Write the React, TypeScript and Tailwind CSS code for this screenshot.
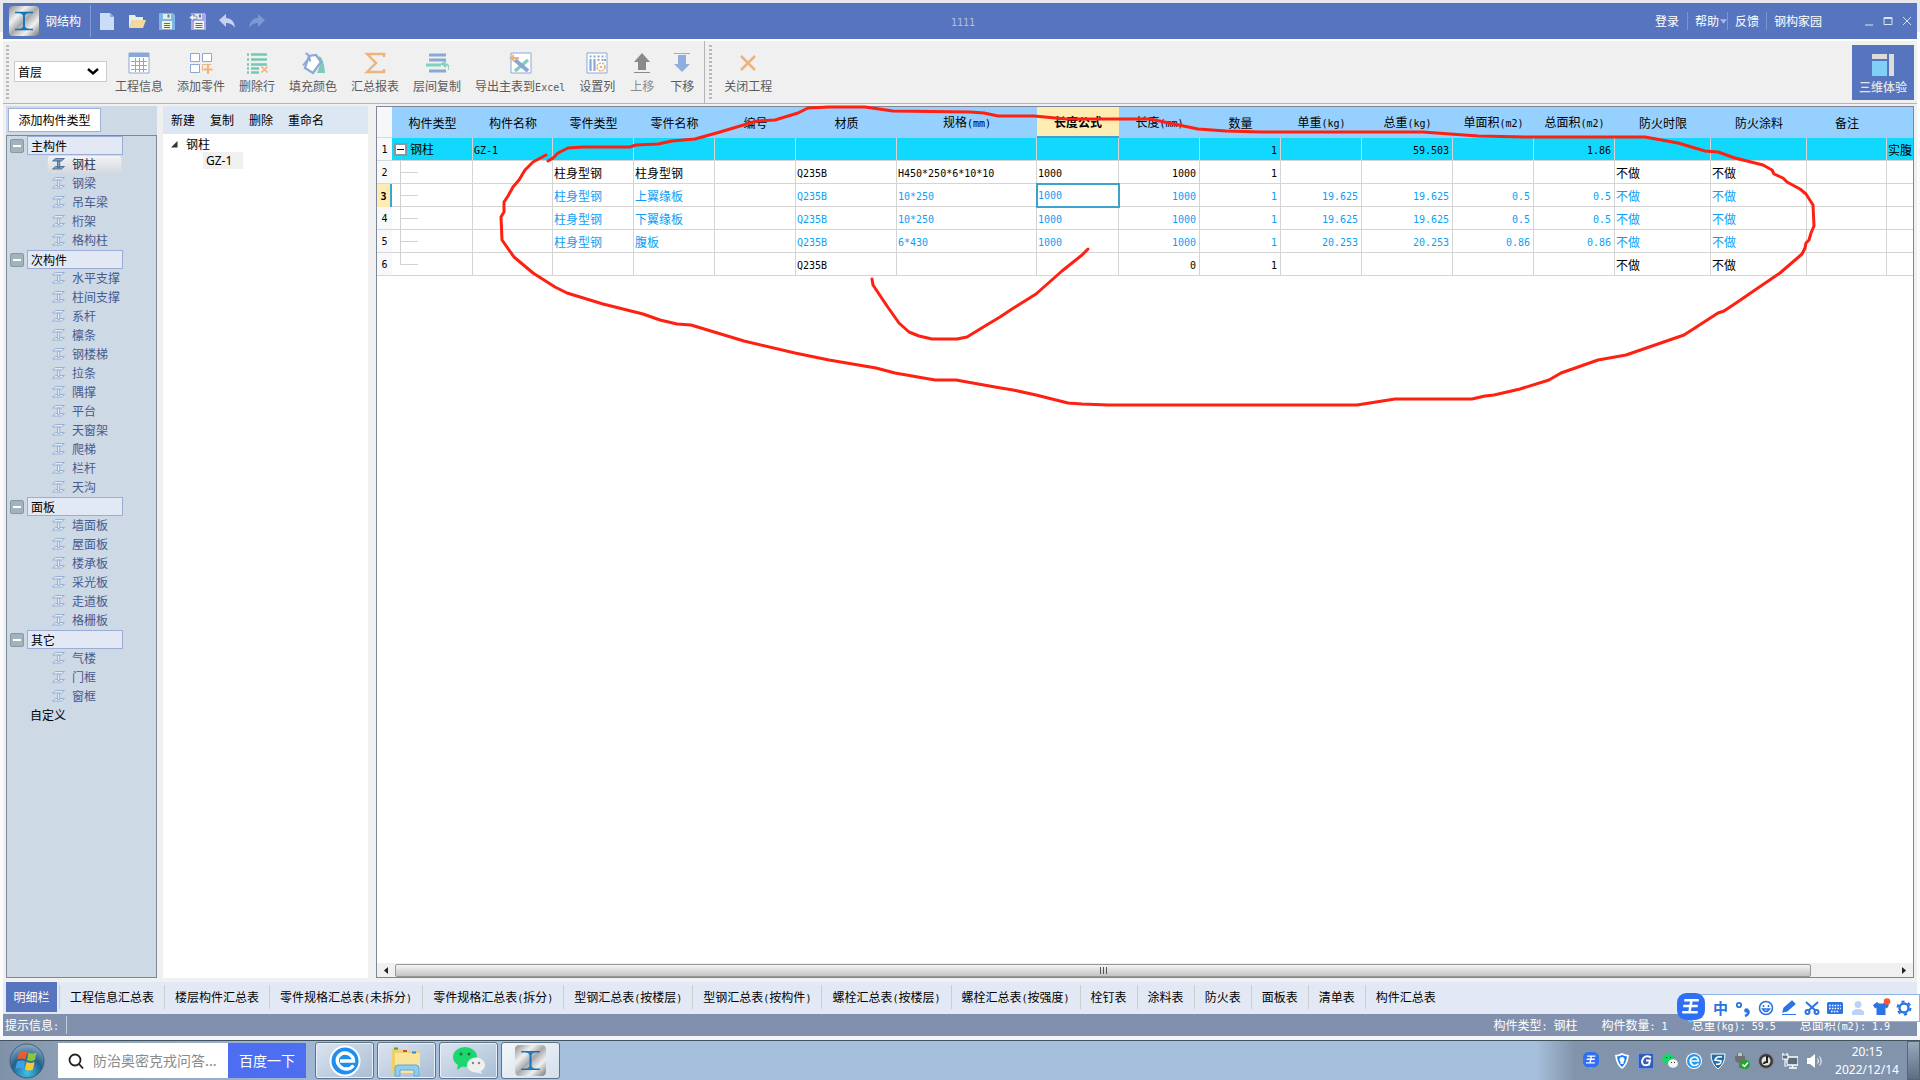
import React from "react";
import clsx from "clsx";

const SECTIONS = [
  { label: "主构件", items: ["钢柱", "钢梁", "吊车梁", "桁架", "格构柱"] },
  {
    label: "次构件",
    items: ["水平支撑", "柱间支撑", "系杆", "檩条", "钢楼梯", "拉条", "隅撑", "平台", "天窗架", "爬梯", "栏杆", "天沟"],
  },
  { label: "面板", items: ["墙面板", "屋面板", "楼承板", "采光板", "走道板", "格栅板"] },
  { label: "其它", items: ["气楼", "门框", "窗框"] },
];

const COLUMNS = [
  { label: "构件类型", col: "w-[81px]" },
  { label: "构件名称", col: "w-[80px]" },
  { label: "零件类型", col: "w-[81px]" },
  { label: "零件名称", col: "w-[81px]" },
  { label: "编号", col: "w-[81px]" },
  { label: "材质", col: "w-[101px]" },
  { label: "规格(mm)", col: "w-[140px]" },
  { label: "长度公式", col: "w-[82px]" },
  { label: "长度(mm)", col: "w-[81px]", right: true },
  { label: "数量", col: "w-[81px]", right: true },
  { label: "单重(kg)", col: "w-[81px]", right: true },
  { label: "总重(kg)", col: "w-[91px]", right: true },
  { label: "单面积(m2)", col: "w-[81px]", right: true },
  { label: "总面积(m2)", col: "w-[81px]", right: true },
  { label: "防火时限", col: "w-[96px]" },
  { label: "防火涂料", col: "w-[96px]" },
  { label: "备注", col: "w-[80px]" },
  { label: "", col: "w-auto" },
];

const ACTIVE_COL = 7;
const ACTIVE_ROW = 2;

const ROWS: { kind: "main" | "part" | "sub"; cells: string[] }[] = [
  { kind: "main", cells: ["钢柱", "GZ-1", "", "", "", "", "", "", "", "1", "", "59.503", "", "1.86", "", "", "", "实腹"] },
  { kind: "part", cells: ["", "", "柱身型钢", "柱身型钢", "", "Q235B", "H450*250*6*10*10", "1000", "1000", "1", "", "", "", "", "不做", "不做", "", ""] },
  { kind: "sub", cells: ["", "", "柱身型钢", "上翼缘板", "", "Q235B", "10*250", "1000", "1000", "1", "19.625", "19.625", "0.5", "0.5", "不做", "不做", "", ""] },
  { kind: "sub", cells: ["", "", "柱身型钢", "下翼缘板", "", "Q235B", "10*250", "1000", "1000", "1", "19.625", "19.625", "0.5", "0.5", "不做", "不做", "", ""] },
  { kind: "sub", cells: ["", "", "柱身型钢", "腹板", "", "Q235B", "6*430", "1000", "1000", "1", "20.253", "20.253", "0.86", "0.86", "不做", "不做", "", ""] },
  { kind: "part", cells: ["", "", "", "", "", "Q235B", "", "", "0", "1", "", "", "", "", "不做", "不做", "", ""] },
];

const TABS = [
  "明细栏", "工程信息汇总表", "楼层构件汇总表", "零件规格汇总表(未拆分)", "零件规格汇总表(拆分)",
  "型钢汇总表(按楼层)", "型钢汇总表(按构件)", "螺栓汇总表(按楼层)", "螺栓汇总表(按强度)",
  "栓钉表", "涂料表", "防火表", "面板表", "清单表", "构件汇总表",
];

// Latin runs are set in a half-width mono face next to full-width Chinese
function Mix({ text }: { text: string }) {
  return (
    <>
      {text.split(/([\x20-\x7e]+)/).filter(Boolean).map((run, i) =>
        /[\x20-\x7e]/.test(run) ? (
          <span key={i} className="font-['DejaVu_Sans_Mono','Liberation_Mono',monospace] text-[10px] whitespace-pre">{run}</span>
        ) : (
          <React.Fragment key={i}>{run}</React.Fragment>
        )
      )}
    </>
  );
}

function AppLogo({ className, id }: { className: string; id: string }) {
  return (
    <svg viewBox="0 0 30 30" className={className} aria-hidden="true">
      <defs>
        <linearGradient id={id} x1="0" y1="0" x2="1" y2="1">
          <stop offset="0" stopColor="#8c8c8c" />
          <stop offset=".3" stopColor="#f0f0f0" />
          <stop offset=".5" stopColor="#a8a8a8" />
          <stop offset=".72" stopColor="#f0f0f0" />
          <stop offset="1" stopColor="#757575" />
        </linearGradient>
      </defs>
      <rect width="30" height="30" rx="4" fill={`url(#${id})`} />
      <path d="M6 6.500h18M6 23.500h18" stroke="#1372b8" strokeWidth="1.500" />
      <path d="M10 7q4 1 4 3v10q0 2-4 3h10q-4-1-4-3V10q0-2 4-3z" fill="#1479c2" />
    </svg>
  );
}

function BeamIcon({ active }: { active?: boolean }) {
  return (
    <svg width="13" height="12" viewBox="0 0 13 12" aria-hidden="true" className="shrink-0">
      <g fill={active ? "#7da3c9" : "#dceefb"} stroke={active ? "#3c5f86" : "#8fa3c8"} strokeWidth=".8">
        <path d="M3.500.5h9l-3 2.500h-9z" />
        <path d="M3.500 8.500h9l-3 2.500h-9z" />
        <path d="M5.500 3h2.200v6.500H5.500z" />
      </g>
    </svg>
  );
}

const QUICK = [
  {
    name: "新建文件",
    icon: <><path d="M1 0h10l4 4v13H1z" fill="#c9def5" /><path d="M11 0v4h4z" fill="#7fb3c9" /></>,
  },
  {
    name: "打开",
    icon: <><path d="M0 15V2h6l1 2h7v3H4z" fill="#e8efe0" /><path d="M0 15l4-8h13l-3 8z" fill="#f3d9a0" /></>,
  },
  {
    name: "保存",
    icon: <><path d="M0 0h14l2 2v15H0z" fill="#7fb5e6" /><path d="M4 1h8v5H4z" fill="#e4f0dd" /><path d="M8.500 1.500h2v3h-2z" fill="#5774be" /><path d="M3 8h10v8H3z" fill="#e9f3e0" /><path d="M5 10.500h6M5 12.500h6M5 14.500h6" stroke="#4c6f94" /></>,
  },
  {
    name: "另存为",
    icon: <><path d="M2 0h14l1 2v15H2z" fill="#aea6ea" /><path d="M6 1h7v5H6z" fill="#e4f0dd" /><path d="M10 1.500h2v3h-2z" fill="#5774be" /><path d="M5 8h10v8H5z" fill="#f0f6e8" /><path d="M6.500 10.500h7M6.500 12.500h7M6.500 14.500h7" stroke="#4c6f94" /><path d="M0 4.500L4.500 1v2.200H8v2.800H4.500V8z" fill="#eaf6e8" stroke="#5774be" strokeWidth=".6" /></>,
  },
  {
    name: "撤销",
    icon: <path d="M0 7l7-6v4q8 0 9 10-3-5-9-5v4z" fill="#c5d2f0" />,
  },
  {
    name: "重做",
    icon: <path d="M16 7L9 1v4Q1 5 0 15q3-5 9-5v4z" fill="#7e98d2" />,
  },
];

const TOOLS = [
  {
    label: "工程信息",
    icon: <><path d="M1 1h20v20H1z" fill="#fff" stroke="#8aa8d4" /><path d="M1 1h20v4H1z" fill="#8aa8d4" /><path d="M3 9.500h16M3 13.500h16M3 17.500h16M7.500 6v14M11.500 6v14M15.500 6v14" stroke="#8aa8d4" /></>,
  },
  {
    label: "添加零件",
    icon: <><path d="M.5 1.500h9v8h-9zM12.500 1.500h9v8h-9zM.5 12.500h9v8h-9z" fill="#fff" stroke="#8aa8d4" /><path d="M12.500 19v-6.500h9" fill="none" stroke="#e9b583" /><path d="M18 13v9M13.500 17.500h9" stroke="#edb37c" strokeWidth="2" /></>,
  },
  {
    label: "删除行",
    icon: <><path d="M1 2.500h2M5 2.500h16M1 7.500h2M5 7.500h16M1 12.500h2M5 12.500h16M1 16.500h2M5 16.500h8M1 20.500h2M5 20.500h8" stroke="#74c9b6" strokeWidth="2.400" /><path d="M15.500 14.500l6 6M21.500 14.500l-6 6" stroke="#edb37c" strokeWidth="1.600" /></>,
  },
  {
    label: "填充颜色",
    icon: <><path d="M17 4q5 2 6 17h-8l3-8z" fill="#7fcab9" /><path d="M7 4l7-1 5 7-8 11-8-5z" fill="#fff" stroke="#8aa8d4" strokeWidth="2.200" /><path d="M3.500 1.500q4 0 4.500 8M1 13.500l4-5" fill="none" stroke="#8aa8d4" strokeWidth="2" /></>,
  },
  {
    label: "汇总报表",
    icon: <path d="M20 5V2H3l9 9-9 9h17v-3" fill="none" stroke="#edb37c" strokeWidth="2.400" />,
  },
  {
    label: "层间复制",
    icon: <><path d="M3 3h17M3 8h17M3 19h17" stroke="#8aa8d4" strokeWidth="3" /><path d="M0 13h15" stroke="#7fd0bd" strokeWidth="3" /><path d="M23 18q1-6-5-6M20 9l-4 3 4 3" fill="none" stroke="#7fd0bd" strokeWidth="1.800" /></>,
  },
  {
    label: "导出主表到Excel",
    icon: <><path d="M2 1h20v20H2z" fill="#fff" stroke="#8aa8d4" /><path d="M19 8L6 19" stroke="#84cdbb" strokeWidth="3.500" /><path d="M6 8l13 11" stroke="#8aa8d4" strokeWidth="4" /><path d="M0 6l5-4v3h5v2.500H5V10z" fill="#edb37c" /></>,
  },
  {
    label: "设置列",
    icon: <><path d="M1 1h20v20H1z" fill="#fff" stroke="#8aa8d4" /><path d="M4.500 7v12M8.500 7v12" stroke="#8aa8d4" strokeWidth="2.200" /><path d="M3.500 4.500H20M12.500 7v4M16.500 7v2M19 7v2" stroke="#8aa8d4" strokeWidth="2" strokeDasharray="2 2" /><circle cx="15" cy="15" r="4" fill="#fff" stroke="#edb37c" strokeWidth="1.600" strokeDasharray="2.400 .8" /><circle cx="15" cy="15" r="1.300" fill="#edb37c" /></>,
  },
  {
    label: "上移",
    icon: <><path d="M11 1l8 9h-4v8H7v-8H3z" fill="#8a8a8a" /><path d="M3 20.500h16" stroke="#8a8a8a" /></>,
  },
  {
    label: "下移",
    icon: <><path d="M11 20l8-8h-4V3H7v9H3z" fill="#8eafdb" /><path d="M3 1.500h16" stroke="#8eafdb" /></>,
  },
];

function Toolbar() {
  return (
    <div className="flex h-[63px] shrink-0 items-stretch border-b border-[#b4b4b4] bg-[#f0f0f0] pl-[3px]">
      <Grip />
      <div className="relative mt-[20px] ml-[5px] h-[21px] w-[93px]">
        <select aria-label="楼层" className="block h-[21px] w-full appearance-none border border-[#c9cbd0] bg-white pl-[3px] text-[12px] leading-[19px] text-black">
          <option>首层</option>
        </select>
        <svg viewBox="0 0 12 8" className="pointer-events-none absolute top-[7px] right-2 h-2 w-3" aria-hidden="true">
          <path d="M1 1l5 4.500L11 1" fill="none" stroke="#000" strokeWidth="2.400" />
        </svg>
      </div>
      <div className="ml-2 flex gap-[14px]">
        {TOOLS.map((t) => (
          <ToolButton key={t.label} {...t} narrow={t.label.length < 3} />
        ))}
      </div>
      <div className="ml-[9px] w-px bg-[#b4b4b4]" />
      <div className="ml-1 flex">
        <Grip />
        <div className="ml-3 flex">
          <ToolButton label="关闭工程" icon={<path d="M4 4l14 14M18 4L4 18" stroke="#edb37c" strokeWidth="2.600" />} />
        </div>
      </div>
      <button className="mt-1 mr-[3px] ml-auto flex h-[55px] w-[62px] flex-col items-center bg-[#5774be] pt-[9px] text-[12px] leading-[16px] font-medium text-[#e4e4e4]">
        <svg viewBox="0 0 22 22" className="mb-[3px] h-[22px] w-[22px]" aria-hidden="true">
          <path d="M0 0h15v5H0zM17 0h5v22h-5z" fill="#dcdcdc" />
          <path d="M0 7h15v15H0z" fill="#80d0f6" />
        </svg>
        三维体验
      </button>
    </div>
  );
}

function Grip() {
  return (
    <div className="my-1 w-[3px] bg-[repeating-linear-gradient(to_bottom,#b9b9b9_0_2px,transparent_2px_4px)]" />
  );
}

function ToolButton({ label, icon, narrow }: { label: string; icon: React.ReactNode; narrow?: boolean }) {
  return (
    <button
      className={clsx(
        "flex flex-col items-center pt-[11px] text-[12px] leading-[16px] whitespace-nowrap",
        narrow && "px-px",
        label === "上移" ? "text-[#8c8c8c]" : "text-[#5a5a5a]"
      )}
    >
      <svg viewBox="0 0 23 23" className="mb-[3px] h-[23px] w-[23px]" aria-hidden="true">{icon}</svg>
      <span><Mix text={label} /></span>
    </button>
  );
}

function TitleBar() {
  return (
    <header className="flex h-9 shrink-0 items-center bg-[#5774be] pl-[6px] text-[12px] text-white">
      <div className="flex flex-1 items-center">
        <AppLogo id="logo-title" className="h-[30px] w-[30px]" />
        <span className="ml-[6px]">钢结构</span>
        <div className="ml-[9px] h-8 w-px bg-[#8299d3]" />
        <div className="ml-2 flex gap-[13px]">
          {QUICK.map((q) => (
            <button key={q.name} aria-label={q.name} className="h-[17px] w-[17px]">
              <svg viewBox="0 0 17 17" className="h-[17px] w-[17px]" aria-hidden="true">{q.icon}</svg>
            </button>
          ))}
        </div>
      </div>
      <span className="text-[#b0bfe6]"><Mix text="1111" /></span>
      <div className="flex flex-1 items-center justify-end">
        <nav className="flex items-center">
          <a href="#login" className="pr-2">登录</a>
          <a href="#help" className="flex items-center border-l border-[#7c95d0] pl-[7px]">
            帮助
            <svg viewBox="0 0 8 5" className="ml-px h-[5px] w-[7px]" aria-hidden="true"><path d="M0 0h8L4 5z" fill="#a9b9e2" /></svg>
          </a>
          <a href="#feedback" className="border-l border-[#7c95d0] px-[7px]">反馈</a>
          <a href="#home" className="border-l border-[#7c95d0] pl-[7px]">钢构家园</a>
        </nav>
        <div className="ml-[42px] flex gap-[9px] pr-[5px]">
          {[
            { name: "最小化", d: "M1 9h8" },
            { name: "最大化", d: "M1 1.500h8v7H1zM1 2.500h8" },
            { name: "关闭", d: "M1 1l8 8M9 1L1 9" },
          ].map((b) => (
            <button key={b.name} aria-label={b.name}>
              <svg viewBox="0 0 10 10" className="h-[10px] w-[10px]" aria-hidden="true">
                <path d={b.d} fill="none" stroke="#dbe3f6" />
              </svg>
            </button>
          ))}
        </div>
      </div>
    </header>
  );
}

function TypePanel() {
  return (
    <aside className="flex w-[151px] shrink-0 flex-col bg-[#cdd9e5]">
      <div className="p-[2px]">
        <button className="block h-6 w-[93px] border border-[#a0b0d8] bg-white text-[12px] leading-[16px] text-black">添加构件类型</button>
      </div>
      <div className="mt-px flex-1 border border-[#7d8799] text-[12px] leading-[18px]">
        {SECTIONS.map((s, si) => (
          <section key={s.label}>
            <div className="flex h-[19px] items-center pl-[3px]">
              <button aria-label={`折叠${s.label}`} className="flex h-[14px] w-[14px] items-center justify-center rounded-[2px] border border-[#8598a4] bg-[#a3b3be]">
                <span className="h-[2px] w-2 bg-white" />
              </button>
              <h3 className="ml-[3px] h-[19px] w-24 border border-[#9bacd6] bg-[#e3e9f4] pl-[3px] text-black">{s.label}</h3>
            </div>
            <ul>
              {s.items.map((item, i) => {
                const active = si === 0 && i === 0;
                return (
                  <li key={item} className="h-[19px] pl-10">
                    <button
                      className={clsx(
                        "flex h-[18px] w-[75px] items-center gap-[7px] rounded-[3px] border pl-1 whitespace-nowrap",
                        active ? "border-[#d8dce2] bg-gradient-to-b from-[#f2f3f5] to-[#d6dade] text-[#1d2c4d]" : "border-transparent text-[#47598f]"
                      )}
                    >
                      <BeamIcon active={active} />
                      {item}
                    </button>
                  </li>
                );
              })}
            </ul>
          </section>
        ))}
        <button className="block pl-[23px] text-black">自定义</button>
      </div>
    </aside>
  );
}

function MemberPanel() {
  return (
    <section className="w-[205px] shrink-0 bg-white text-[12px] text-black">
      <div className="flex h-7 items-center gap-[15px] bg-[#dce7f3] pl-2">
        {["新建", "复制", "删除", "重命名"].map((a) => (
          <button key={a}>{a}</button>
        ))}
      </div>
      <div className="flex items-center gap-2 pt-[2px] pl-2 leading-4">
        <svg viewBox="0 0 7 7" className="h-[7px] w-[7px]" aria-hidden="true"><path d="M6.500 0v6.500H0z" fill="#333" /></svg>
        钢柱
      </div>
      <button className="ml-10 block h-[17px] w-10 bg-[#f0f0f0] pl-[3px] text-left font-['Noto_Sans',sans-serif] text-[12px] leading-[17px]">GZ-1</button>
    </section>
  );
}

function Branch({ last }: { last: boolean }) {
  return (
    <svg viewBox="0 0 30 22" className="block h-[22px] w-[30px]" aria-hidden="true">
      <path d={last ? "M8.500 0v11.500H26" : "M8.500 0v22M8.500 11.500H26"} fill="none" stroke="#d2d2d2" />
    </svg>
  );
}

function DetailTable() {
  const [formula, setFormula] = React.useState("1000");
  return (
    <table className="w-full table-fixed border-separate border-spacing-0 text-[12px] leading-[16px]">
      <colgroup>
        <col className="w-[15px]" />
        {COLUMNS.map((c, i) => <col key={i} className={c.col} />)}
      </colgroup>
      <thead>
        <tr className="h-[31px]">
          <th aria-label="行号" className="border-b border-[#d8d8d8] bg-[#f6f7f8]" />
          {COLUMNS.map((c, i) => (
            <th
              key={i}
              className={clsx(
                "p-0 whitespace-nowrap",
                i === ACTIVE_COL ? "border-b-2 border-[#3ba3cd] bg-[#ffecb3] font-bold" : "bg-[#95d0ff] font-normal"
              )}
            >
              <Mix text={c.label} />
            </th>
          ))}
        </tr>
      </thead>
      <tbody>
        {ROWS.map((row, r) => (
          <tr
            key={r}
            className={clsx("h-[23px]", row.kind === "main" && "bg-[#11d9fd]", row.kind === "sub" ? "text-[#0a9ff5]" : "text-black")}
          >
            <th
              scope="row"
              className={clsx(
                "p-0 text-center text-black",
                r === ACTIVE_ROW ? "border-r-2 border-[#3ba3cd] bg-[#ffecb3] font-bold" : "border-b border-[#d8d8d8] bg-[#f7f8f9] font-normal"
              )}
            >
              <Mix text={String(r + 1)} />
            </th>
            {row.cells.map((cell, c) => (
              <td
                key={c}
                className={clsx(
                  "overflow-hidden border-b border-[#d4d4d4] p-0 whitespace-nowrap",
                  c > 0 && "pt-px",
                  c < 17 && "border-r",
                  COLUMNS[c].right ? "pr-[3px] text-right" : c > 0 && "pl-px",
                  r === ACTIVE_ROW && c === ACTIVE_COL && "outline-2 -outline-offset-1 outline-[#3ba3cd]"
                )}
              >
                {c === 0 && r === 0 ? (
                  <div className="flex items-center gap-[3px] pl-[2px]">
                    <button aria-label="折叠" className="flex h-[13px] w-[13px] items-center justify-center border-2 border-[#8f9499] bg-white">
                      <span className="h-px w-[7px] bg-black" />
                    </button>
                    {cell}
                  </div>
                ) : c === 0 ? (
                  <Branch last={r === ROWS.length - 1} />
                ) : r === ACTIVE_ROW && c === ACTIVE_COL ? (
                  <input
                    aria-label="长度公式"
                    value={formula}
                    onChange={(e) => setFormula(e.target.value)}
                    className="block w-full bg-transparent pt-px font-['DejaVu_Sans_Mono',monospace] text-[10px] leading-[16px] outline-none"
                  />
                ) : (
                  <Mix text={cell} />
                )}
              </td>
            ))}
          </tr>
        ))}
      </tbody>
    </table>
  );
}

function ScrollBar() {
  return (
    <div className="flex h-[14px] items-center bg-[#f0f0f0]">
      <button aria-label="向左滚动" className="flex w-[18px] justify-center">
        <svg viewBox="0 0 4 7" className="h-[7px] w-1" aria-hidden="true"><path d="M4 0v7L0 3.500z" fill="#222" /></svg>
      </button>
      <div className="flex h-[13px] flex-1 items-center justify-center gap-[2px] rounded-[2px] border border-[#979797] bg-gradient-to-b from-[#f4f4f4] via-[#dcdcdc] to-[#c4c4c4]">
        <span className="h-[7px] w-px bg-[#555]" />
        <span className="h-[7px] w-px bg-[#555]" />
        <span className="h-[7px] w-px bg-[#555]" />
      </div>
      <button aria-label="向右滚动" className="flex w-[102px] justify-end pr-[7px]">
        <svg viewBox="0 0 4 7" className="h-[7px] w-1" aria-hidden="true"><path d="M0 0v7l4-3.500z" fill="#222" /></svg>
      </button>
    </div>
  );
}

const IME_ICONS = [
  { name: "标点", icon: <><circle cx="4" cy="5" r="2.200" fill="none" stroke="#2b74e2" strokeWidth="1.800" /><path d="M13 10q2 4-3 6" fill="none" stroke="#2b74e2" strokeWidth="2.500" /><circle cx="11.500" cy="10.500" r="2.300" fill="#2b74e2" /></> },
  { name: "表情", icon: <g fill="none" stroke="#2b74e2" strokeWidth="1.600"><circle cx="8" cy="8" r="6.500" /><path d="M4.500 9q3.500 5 7 0zM5.500 5v2M10.500 5v2" /></g> },
  { name: "手写", icon: <path d="M1 14.500h14M2 12l1-4 8-7 3 3-8 7z" fill="#2b74e2" stroke="#2b74e2" strokeWidth="1.200" /> },
  { name: "截图", icon: <g fill="none" stroke="#2b74e2" strokeWidth="2"><path d="M2 2l10 9M14 2L4 11" /><circle cx="3.500" cy="12" r="2" /><circle cx="12.500" cy="12" r="2" /></g> },
  { name: "键盘", icon: <><rect x="0" y="2" width="16" height="12" rx="1.500" fill="#2b74e2" /><path d="M2 5.500h12M2 8.500h12M4 11.500h8" stroke="#fff" strokeWidth="1.600" strokeDasharray="1.600 1.200" /></> },
  { name: "账号", icon: <g fill="#bcd2f7"><circle cx="8" cy="4.500" r="3.500" /><path d="M2 15V12q1-3 6-3t6 3v3z" /></g> },
  { name: "皮肤", icon: <><path d="M4 2l2 1.500h4L12 2l4 3-2 3.500-1.500-1V15h-9V7.500L2 8.500 0 5z" fill="#2b74e2" /><circle cx="14" cy="1.500" r="3.300" fill="#fc5531" /></> },
  { name: "设置", icon: <><circle cx="8" cy="8" r="4.500" fill="none" stroke="#2b74e2" strokeWidth="2.400" /><circle cx="8" cy="8" r="6.500" fill="none" stroke="#2b74e2" strokeWidth="2" strokeDasharray="3.200 3.600" /></> },
];

function WangLogo({ className }: { className: string }) {
  return (
    <svg viewBox="0 0 27 29" className={className} aria-hidden="true">
      <path d="M9 25l4 4 5-5z" fill="#55c2fa" />
      <rect x="0" y="0" width="27" height="26" rx="9" fill="#2e6ff6" />
      <path d="M7 7h14M6 12.500h14M5 18.500h15M14 7l-2 11.500" stroke="#fff" strokeWidth="2.400" fill="none" />
    </svg>
  );
}

function ImeBar() {
  return (
    <div className="absolute right-0 bottom-[58px] flex h-7 w-[232px] items-center border border-[#8fb4e4] bg-white pr-[7px] pl-6">
      <WangLogo className="absolute -top-[2px] -left-[12px] h-[30px] w-[28px]" />
      <div className="flex flex-1 items-center justify-between overflow-visible">
        <button className="text-[15px] leading-[18px] font-bold text-[#2b74e2]">中</button>
        {IME_ICONS.map((i) => (
          <button key={i.name} aria-label={i.name}>
            <svg viewBox="0 0 16 16" className="h-4 w-4 overflow-visible" aria-hidden="true">{i.icon}</svg>
          </button>
        ))}
      </div>
    </div>
  );
}

const TRAY = [
  { name: "安全", icon: <><path d="M8 0q4 2 7 2-1 10-7 14Q2 12 1 2q3 0 7-2z" fill="#fff" /><path d="M8 2q3 1 5 1.500-1 7-5 10.500-4-3.500-5-10.500Q6 3 8 2z" fill="#1b7bf0" /><circle cx="8" cy="6.500" r="2.500" fill="#fff" /><path d="M6.500 7h3v4h-3z" fill="#fff" /></> },
  { name: "输入", icon: <><rect width="16" height="16" fill="#315cbd" stroke="#a9c2ee" /><path d="M13 4.500Q6 1 4 8q0 6 7 3.500l1-4H8" fill="none" stroke="#fff" strokeWidth="2" /></> },
  { name: "微信", icon: <><ellipse cx="6" cy="6" rx="6" ry="5" fill="#19d66b" /><ellipse cx="11" cy="10.500" rx="5" ry="4.300" fill="#f4f4f4" /><path d="M4 4.500h1M8 4.500h1M9 9.500h1M12 9.500h1" stroke="#333" /></> },
  { name: "浏览器", icon: <><circle cx="8" cy="8" r="8" fill="#fff" /><circle cx="8" cy="8" r="7" fill="#1f9af0" /><path d="M12.500 10.500Q10 13.500 6.500 12 3.500 9.500 4.500 6.500 7 3 10.500 4.500q2 1.500 2 3.500h-7" fill="none" stroke="#fff" strokeWidth="1.700" /></> },
  { name: "防护", icon: <><path d="M1 1h14q0 10-7 15Q1 11 1 1z" fill="#1f6ea8" stroke="#fff" /><path d="M12 4Q6 3 5 7l6 1q0 4-5 3" fill="none" stroke="#fff" strokeWidth="1.600" /></> },
  { name: "设备", icon: <><path d="M3 0h6v3h2v6q-3 1-3 6H5v-5Q1 9 1 6V3h2z" fill="#6f6f6f" /><path d="M4 0h4v3H4z" fill="#c4c4c4" /><circle cx="11" cy="11.500" r="5" fill="#27a335" /><path d="M8.500 11.500l2 2 3.500-4" fill="none" stroke="#fff" strokeWidth="1.500" /></> },
  { name: "音频", icon: <><circle cx="8" cy="8" r="7.500" fill="#3b3b3b" stroke="#888" /><circle cx="8" cy="8" r="4.500" fill="#e5e5e5" /><path d="M9 3v6q-3 0-3 2" stroke="#222" strokeWidth="2" fill="none" /></> },
  { name: "网络", icon: <><path d="M5 4h11v8H5z" fill="#5d6d80" stroke="#fff" strokeWidth="1.400" /><path d="M7 15h8M10.500 12v3" stroke="#fff" strokeWidth="1.500" /><path d="M0 2h6v4H0zM1 0v2M5 0v2M3 6v7h2" stroke="#fff" fill="#5d6d80" strokeWidth="1.200" /></> },
  { name: "音量", icon: <><path d="M1 5h3l5-4v14l-5-4H1z" fill="#fff" /><path d="M11.500 5.500q2 2.500 0 5M13.500 3.500q3.500 4.500 0 9" fill="none" stroke="#fff" /></> },
];

const APPS = [
  {
    name: "浏览器",
    icon: <><circle cx="16" cy="16" r="15.500" fill="#fff" /><circle cx="16" cy="16" r="13.500" fill="#1c8ff0" /><path d="M24.500 20.500Q20 26 13 23 7 19 8.500 13 12 6.500 19 8.500q5.500 2.500 5.500 7.500H11" fill="none" stroke="#fff" strokeWidth="3.400" /></>,
  },
  {
    name: "资源管理器",
    icon: <><path d="M1 4h9l2 2h17v22H1z" fill="#f0cf68" /><path d="M4 8h25v20H4z" fill="#f9e49b" /><path d="M3 3.500h4" stroke="#4f9f3b" strokeWidth="2" /><path d="M12 6h4" stroke="#d64b2c" strokeWidth="2" /><path d="M21 7.500h4" stroke="#3b86c8" strokeWidth="2" /><path d="M4 31v-8q0-3 3-3h18q3 0 3 3v8h-5v-6H9v6z" fill="#8ecdf0" stroke="#5fa9d8" /></>,
  },
  {
    name: "微信",
    icon: <><ellipse cx="12" cy="12" rx="12" ry="10" fill="#1cd76d" /><path d="M5 19l-1 6 6-4z" fill="#1cd76d" /><ellipse cx="23" cy="20" rx="9" ry="7.500" fill="#efefef" /><path d="M27 25l2 4-6-2z" fill="#efefef" /><g fill="#14733c"><circle cx="8" cy="9" r="1.500" /><circle cx="16" cy="9" r="1.500" /></g><g fill="#888"><circle cx="20" cy="18" r="1.200" /><circle cx="26" cy="18" r="1.200" /></g></>,
  },
];

function Taskbar() {
  return (
    <footer className="flex h-10 shrink-0 items-stretch border-t border-[#40535f] bg-[#a6bfdc] bg-[linear-gradient(to_right,#7f90a9_0,#8d9fb7_60px,#a6bfdc_400px,#a6bfdc_80%,#8294ab_82%)]">
      <button aria-label="开始" className="ml-[9px] flex w-9 items-center">
        <svg viewBox="0 0 36 36" className="h-9 w-9" aria-hidden="true">
          <defs>
            <radialGradient id="orb" cx=".5" cy=".85" r=".9">
              <stop offset="0" stopColor="#3fc2ea" />
              <stop offset=".5" stopColor="#22608f" />
              <stop offset="1" stopColor="#9db7c9" />
            </radialGradient>
          </defs>
          <circle cx="18" cy="18" r="17" fill="url(#orb)" stroke="#3e5f7c" />
          <path d="M10 10q4-3 8-1l-1.500 7.500q-4-2-8 0z" fill="#ef5b2b" />
          <path d="M19.500 9.500q4 2 8 0L26 17q-4 2-8 0z" fill="#8cc63e" />
          <path d="M8 18.500q4-2 8 0L14.500 26q-4-2-8 0z" fill="#3fa0e8" />
          <path d="M17.500 19q4 2 8 0L24 26.500q-4 2-8 0z" fill="#fcc72c" />
        </svg>
      </button>
      <form className="my-[2px] ml-[13px] flex" onSubmit={(e) => e.preventDefault()}>
        <div className="flex w-[170px] items-center bg-white pl-[10px]">
          <svg viewBox="0 0 16 16" className="h-4 w-4" aria-hidden="true">
            <circle cx="7" cy="7" r="5.500" fill="none" stroke="#222" strokeWidth="1.800" />
            <path d="M11 11l4 4.500" stroke="#222" strokeWidth="1.800" />
          </svg>
          <input aria-label="搜索" placeholder="防治奥密克戎问答..." className="ml-[9px] w-[130px] bg-transparent text-[14px] outline-none placeholder:text-[#8a8a8a]" />
        </div>
        <button className="w-[78px] bg-[#4e6ef2] text-[14px] text-white">百度一下</button>
      </form>
      <div className="ml-[9px] flex gap-[3px] py-px">
        {APPS.map((a) => (
          <button key={a.name} aria-label={a.name} className="flex w-[59px] items-center justify-center rounded-[3px] border border-[#5f7388] bg-gradient-to-br from-[#dbe5f0] to-[#a9bdd5] shadow-[inset_0_0_0_1px_#e8eff7]">
            <svg viewBox="0 0 32 32" className="h-8 w-8" aria-hidden="true">{a.icon}</svg>
          </button>
        ))}
        <button aria-label="钢结构" className="flex w-[59px] items-center justify-center rounded-[3px] border border-[#5f7388] bg-gradient-to-br from-[#f4f7fa] to-[#d3dfec]">
          <AppLogo id="logo-task" className="h-[31px] w-[31px]" />
        </button>
      </div>
      <div className="ml-auto flex items-center gap-2">
        <WangLogo className="mr-[7px] h-[17px] w-4" />
        {TRAY.map((t) => (
          <button key={t.name} aria-label={t.name}>
            <svg viewBox="0 0 16 16" className="h-4 w-4" aria-hidden="true">{t.icon}</svg>
          </button>
        ))}
      </div>
      <div className="ml-[11px] w-[68px] pt-[2px] text-center font-['Noto_Sans','Noto_Sans_CJK_SC',sans-serif] text-[12px] leading-[18px] whitespace-nowrap text-white">
        <div>20:15</div>
        <div>2022/12/14</div>
      </div>
      <button aria-label="显示桌面" className="ml-[6px] w-[13px] border border-[#566577] bg-gradient-to-b from-[#9aa9bb] to-[#5d6d83]" />
    </footer>
  );
}

const LOOP =
  "M548 161L553 158L558 153L568 148L583 147L630 147L636 145L658 144L672 141L695 139L720 132L757 121L775 120L798 113L808 108L829 107L865 107L893 111L970 112L984 113L998 116L1034 116L1066 119L1150 119L1169 123L1198 129L1226 131L1262 132L1423 132L1478 136L1530 137L1645 137L1678 143L1705 151L1718 152L1735 158L1763 165L1772 170L1774 174L1783 178L1787 182L1800 189L1806 194L1813 205L1814 226L1811 233L1809 240L1806 243L1805 248L1802 254L1780 273L1755 290L1739 301L1724 311L1718 313L1684 335L1626 355L1598 360L1561 373L1549 380L1520 389L1494 395L1485 396L1472 399L1395 399L1357 405L1108 405L1082 404L1068 403L1036 395L1013 390L995 387L956 380L935 380L895 373L876 368L829 360L795 353L744 341L691 325L677 324L660 320L643 314L603 304L567 293L555 287L533 273L514 257L502 240L501 217L504 212L504 202L508 196L513 187L519 180L525 170L533 162L546 155";
const TICK =
  "M872 279L873 285L887 306L899 323L909 332L919 336L932 339L957 339L967 337L985 326L1000 317L1012 309L1036 294L1062 271L1082 255L1088 249";

export default function App() {
  return (
    <div className="relative flex h-screen flex-col overflow-hidden bg-[linear-gradient(to_bottom,#e7e8ec_32px,#fbfbfc_32px)] pt-[3px] font-['Noto_Sans_CJK_SC',sans-serif]">
      <div className="mr-[3px] ml-[3px] flex min-h-0 flex-1 flex-col bg-[#f0f0f0]">
        <TitleBar />
        <div className="h-[2px] shrink-0 bg-white" />
        <Toolbar />
        <main className="mt-[2px] mb-1 flex min-h-0 flex-1 pr-[3px] pl-[3px]">
          <TypePanel />
          <div className="ml-[6px] flex"><MemberPanel /></div>
          <section className="ml-2 flex min-w-0 flex-1 flex-col border border-[#7d8799] bg-white">
            <div className="flex-1 overflow-hidden"><DetailTable /></div>
            <ScrollBar />
          </section>
        </main>
        <nav className="flex h-8 shrink-0 items-start bg-[#e3e9f4] pl-[3px] text-[12px] text-black">
          {TABS.map((t, i) =>
            i === 0 ? (
              <button key={t} className="mr-[2px] h-[30px] w-[51px] bg-[#5774be] text-white">{t}</button>
            ) : (
              <button key={t} className="mt-[3px] h-6 border-l border-[#cdcdcd] px-[10px] whitespace-nowrap"><Mix text={t} /></button>
            )
          )}
        </nav>
        <div className="flex h-[22px] shrink-0 items-center bg-[#8191ad] pl-[2px] text-[12px] text-white">
          <span><Mix text="提示信息:" /></span>
          <span className="ml-[7px] h-[18px] w-px bg-[#c5cddb]" />
          <div className="ml-auto flex gap-6 pr-[27px] whitespace-nowrap">
            {["构件类型: 钢柱", "构件数量: 1", "总重(kg): 59.5", "总面积(m2): 1.9"].map((s) => (
              <span key={s}><Mix text={s} /></span>
            ))}
          </div>
        </div>
      </div>
      <div className="h-1 shrink-0 bg-[#f3f6f8]" />
      <Taskbar />
      <ImeBar />
      {/* Red pen markup drawn over the whole window */}
      <svg viewBox="0 0 1920 1080" className="pointer-events-none absolute top-0 left-0 h-auto w-full" aria-hidden="true">
        <g fill="none" stroke="#fe2010" strokeWidth="3" strokeLinecap="round" strokeLinejoin="round">
          <path d={LOOP} />
          <path d={TICK} />
        </g>
      </svg>
    </div>
  );
}
